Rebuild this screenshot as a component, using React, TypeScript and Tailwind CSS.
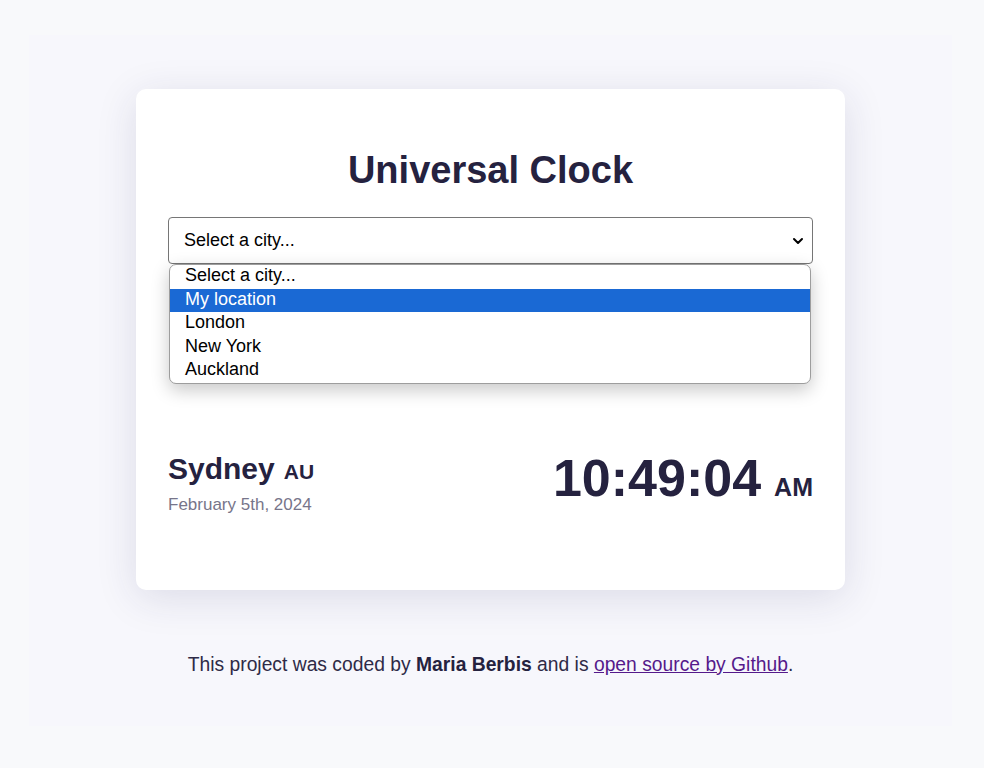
import React from "react";

const cities = ["Select a city...", "My location", "London", "New York", "Auckland"];

export default function App() {
  return (
    <div className="min-h-[768px] bg-[#f8f9fb] pl-[29px] pr-[32px] pt-[35px] pb-[42px] font-['Liberation_Sans',Arial,sans-serif]">
      <div className="bg-[#f7f7fc] pt-[54px] pb-[49px]">
        <div className="mx-auto w-[709px] rounded-[10px] bg-white px-[32px] pt-[58px] pb-[75px] shadow-[0_8px_40px_rgba(40,40,90,0.13)]">
          <h1 className="text-center text-[38px] font-bold leading-[46px] text-[#25223f]">Universal Clock</h1>

          <div className="relative mt-[24px]">
            <div className="flex h-[47px] items-center justify-between rounded-[4px] border border-[#767676] bg-white pl-[15px] pr-[6px] text-[18px] text-black">
              <span>Select a city...</span>
              <svg width="14" height="14" viewBox="0 0 14 14" className="mr-[1px]">
                <path d="M3 5 L7 9 L11 5" fill="none" stroke="#000" strokeWidth="2" strokeLinecap="round" strokeLinejoin="round" />
              </svg>
            </div>

            <ul className="absolute left-[1px] right-[2px] top-[47px] z-10 overflow-hidden rounded-[7px] border border-[#9d9d9d] bg-white text-[18px] text-black shadow-[0_6px_18px_rgba(0,0,0,0.22)]">
              {cities.map((c, i) => (
                <li
                  key={c}
                  className={`h-[23.6px] pl-[15px] leading-[21px] ${i === 1 ? "bg-[#1a69d4] text-white" : ""}`}
                >
                  {c}
                </li>
              ))}
            </ul>
          </div>

          <div className="h-[188px] pt-[66px]">
            <div className="h-[18px] w-[643px] border-r border-[#5b9bd5]" />
          </div>

          <div className="flex items-start justify-between">
            <div>
              <div className="flex items-baseline gap-[9px] text-[#25223f]">
                <span className="text-[30px] font-bold leading-[34px]">Sydney</span>
                <span className="text-[21px] font-bold">AU</span>
              </div>
              <div className="mt-[7px] text-[17px] leading-[20px] text-[#77758a]">February 5th, 2024</div>
            </div>
            <div className="flex items-baseline gap-[13px] text-[#25223f]">
              <span className="text-[52px] font-bold leading-none">10:49:04</span>
              <span className="text-[25px] font-bold leading-none">AM</span>
            </div>
          </div>
        </div>

        <p className="mt-[63px] text-center text-[19.3px] leading-[24px] text-[#2e2a47]">
          This project was coded by <strong className="font-bold text-[#25223f]">Maria Berbis</strong> and is{" "}
          <a href="#" className="text-[#551a8b] underline">open source by Github</a>.
        </p>
      </div>
    </div>
  );
}
